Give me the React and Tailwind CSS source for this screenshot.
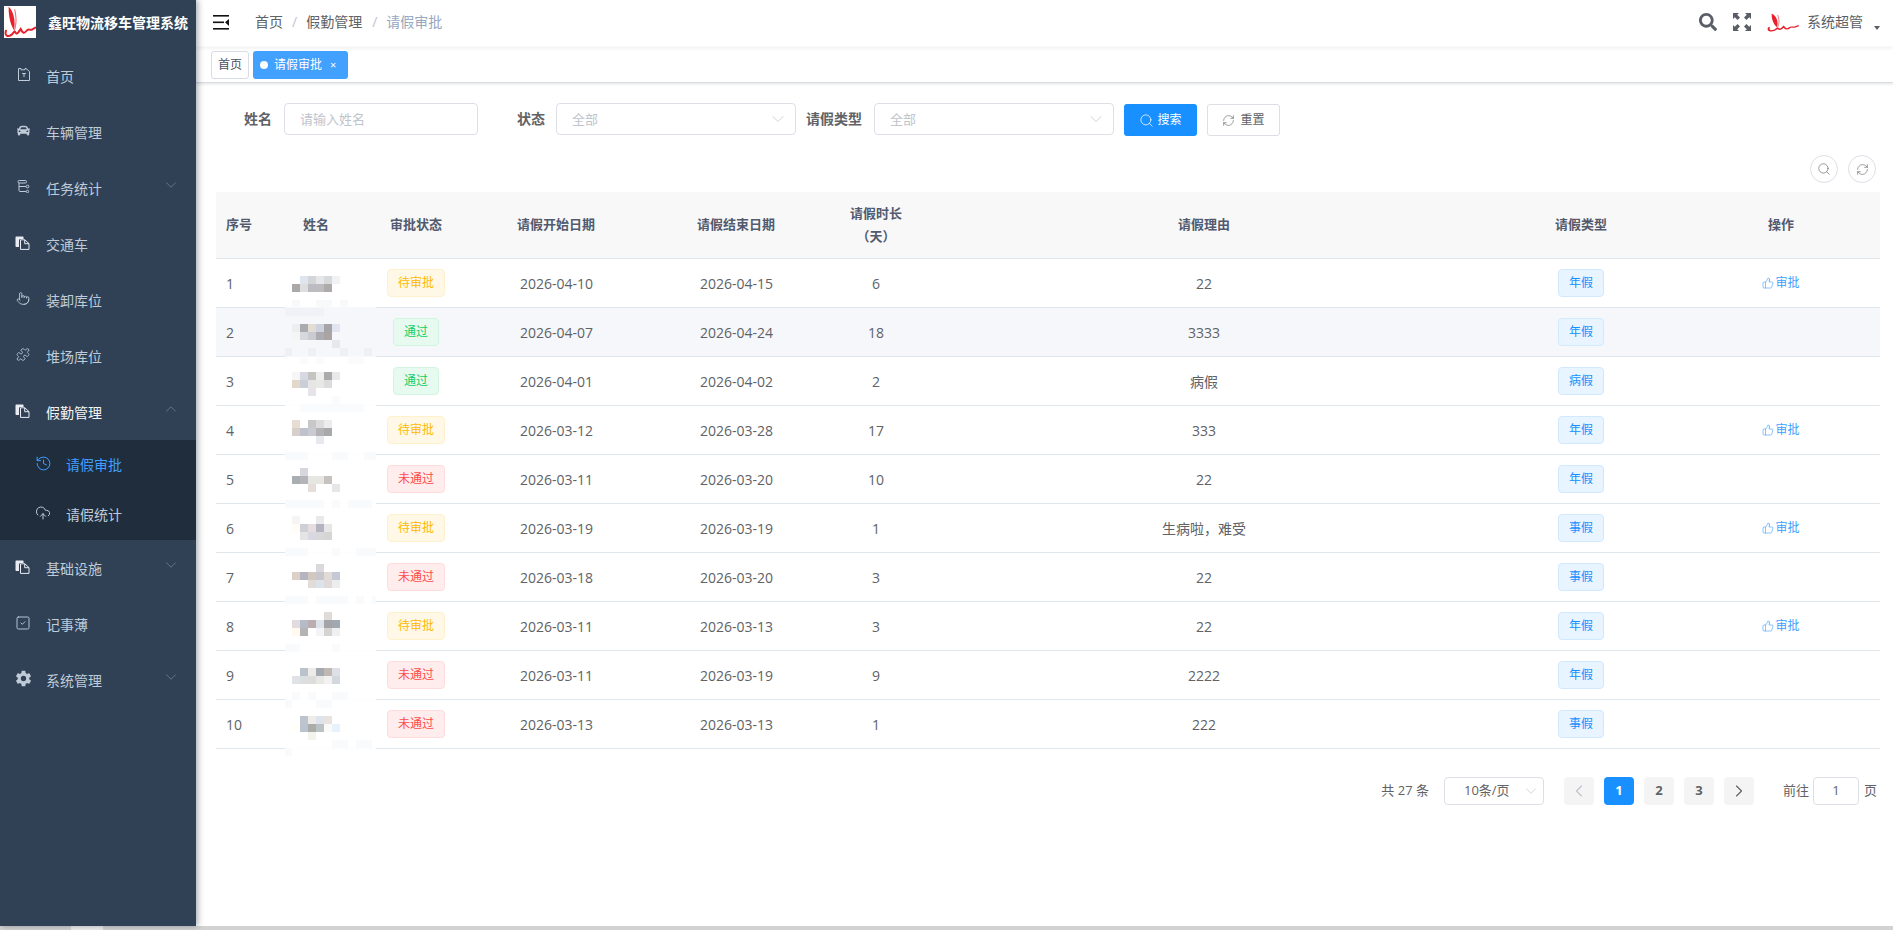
import React from 'react'
import { ChevronDown, ChevronUp, ChevronLeft, ChevronRight, Search, RefreshCw, ThumbsUp, History, CloudUpload, SquareCheck, Puzzle, Pointer } from 'lucide-react'
import { FaCar, FaSearch } from 'react-icons/fa'
import { IoSettingsSharp } from 'react-icons/io5'

const rows = [
  [1, '待审批', '2026-04-10', '2026-04-15', 6, '22', '年假', true],
  [2, '通过', '2026-04-07', '2026-04-24', 18, '3333', '年假', false],
  [3, '通过', '2026-04-01', '2026-04-02', 2, '病假', '病假', false],
  [4, '待审批', '2026-03-12', '2026-03-28', 17, '333', '年假', true],
  [5, '未通过', '2026-03-11', '2026-03-20', 10, '22', '年假', false],
  [6, '待审批', '2026-03-19', '2026-03-19', 1, '生病啦，难受', '事假', true],
  [7, '未通过', '2026-03-18', '2026-03-20', 3, '22', '事假', false],
  [8, '待审批', '2026-03-11', '2026-03-13', 3, '22', '年假', true],
  [9, '未通过', '2026-03-11', '2026-03-19', 9, '2222', '年假', false],
  [10, '未通过', '2026-03-13', '2026-03-13', 1, '222', '事假', false],
]

const tagClass = {
  待审批: 'bg-[#fff8e6] border-[#fff1cc] text-[#ffba00]',
  通过: 'bg-[#e7faf0] border-[#d0f5e0] text-[#13ce66]',
  未通过: 'bg-[#ffeded] border-[#ffdbdb] text-[#ff4949]',
}

// [y, first column, colours...] column 0 sits at x=284, cells are 8px
const mosaic = [
  [276, 2, '#dfe5ec', '#d4d5d8', '#e6e7e9', '#d8d9db', '#f0f2f6'],
  [284, 1, '#aaa8a8', '#dedede', '#bcbcc2', '#bebcc0', '#aeacab'],
  [324, 1, '#eeeef2', '#a9abaf', '#e3dcd3', '#cdd2df', '#a5a5a8', '#e0e5f0'],
  [332, 1, '#f5f5f5', '#d6d8de', '#cbcad0', '#adacb3', '#aaa5a2'],
  [340, 6, '#e8e8ec'],
  [372, 1, '#f6f6f6', '#d6d9e1', '#c4c4c2', '#eeeeec', '#a9abad', '#e8e8ea'],
  [380, 1, '#e3d8cc', '#c9ced8', '#e6e6e4', '#e8e8e6', '#dcdcdc'],
  [388, 3, '#e6e4e8'],
  [420, 1, '#e8ddd3', '#ffffff', '#c9c8c8', '#dcdcde', '#ececec'],
  [428, 1, '#d6cfcc', '#bfc2cb', '#c8ccd2', '#b4b2b4', '#a8a9ab'],
  [436, 4, '#e6eaef'],
  [468, 2, '#d6d8de'],
  [476, 1, '#a9aeb2', '#b3b5b8', '#e6e7e2', '#e6e6e2', '#c6c2c0'],
  [484, 3, '#e6dedb'],
  [484, 6, '#e6e6e8'],
  [516, 1, '#f5f5f5'],
  [516, 4, '#e9eaee'],
  [524, 1, '#fffcf8', '#cfd0d6', '#e6dde0', '#b5b3c0', '#e7e7e7'],
  [532, 2, '#e4e4e4', '#d8d8e0', '#d8d8dc', '#d5d5d5'],
  [564, 4, '#dadade'],
  [572, 1, '#dccfc6', '#b3b6c0', '#d2c8c0', '#c8c8cc', '#e0dbd8', '#c5c9d6'],
  [580, 3, '#e2dcd8', '#dde3ea', '#dedbda', '#ededed'],
  [612, 5, '#dfdbd8'],
  [620, 1, '#e0dce0', '#b5bcc8', '#bbaeb0', '#dde3e8', '#a4a4a8', '#a0a8b0'],
  [628, 1, '#fff9ef', '#b5b3b3', '#ffffff', '#f2f4f7', '#d6d3d3', '#eff0f2'],
  [668, 2, '#bac2cc', '#eeece8', '#a5aab0', '#c0b8b2', '#dde0e6'],
  [676, 1, '#e0e2e6', '#dcdfe0', '#dfdcdc', '#e8e8e4', '#f3f2f0', '#d3d8de'],
  [716, 2, '#bec4ce', '#eeece8', '#dfe3ee', '#e6e3e0'],
  [724, 1, '#fffef8', '#bbc3cf', '#a9aca8', '#bcc1c6', '#fafaf7', '#e8f2fd'],
  [732, 3, '#f3f3ee'],
]

// faint blocks of the mosaic: [x, y, width, height, colour]
const faint = [
  [285, 307, 91, 1, '#f8f9fc'], [285, 356, 91, 1, '#f7f8fb'], [285, 405, 91, 1, '#fdfdfe'],
  [285, 454, 91, 1, '#fdfdfe'], [285, 503, 91, 1, '#fdfdfe'], [285, 552, 91, 1, '#fdfdfe'],
  [285, 601, 91, 1, '#fdfdfe'], [285, 650, 91, 1, '#fdfdfe'], [285, 699, 91, 1, '#fdfdfe'],
  [285, 748, 91, 1, '#fdfdfe'],
  [292, 300, 8, 8, '#f8f9fb'], [316, 300, 16, 8, '#f8f9fb'], [340, 300, 8, 8, '#f8f9fb'],
  [285, 308, 24, 8, '#f1f2f7'], [308, 308, 16, 8, '#f1f2f7'],
  [285, 348, 7, 8, '#eff0f5'], [308, 348, 8, 8, '#eff0f5'], [340, 348, 8, 8, '#eff0f5'], [364, 348, 8, 8, '#eff0f5'],
  [300, 356, 8, 8, '#fbfbfc'], [316, 356, 8, 8, '#fbfbfc'], [348, 356, 16, 8, '#fbfbfc'],
  [300, 404, 64, 8, '#fafbfd'], [332, 396, 8, 8, '#fafbfd'],
  [285, 452, 23, 8, '#f9fafc'], [332, 452, 16, 8, '#f9fafc'], [364, 452, 12, 8, '#f9fafc'],
  [285, 500, 39, 8, '#f9fafc'], [332, 500, 8, 8, '#f9fafc'], [348, 500, 24, 8, '#f9fafc'],
  [285, 548, 23, 8, '#f9fafc'], [332, 548, 8, 8, '#f9fafc'], [356, 548, 20, 8, '#f9fafc'],
  [285, 596, 23, 8, '#f9fafc'], [316, 596, 32, 8, '#f9fafc'], [356, 596, 8, 8, '#f9fafc'], [372, 596, 4, 8, '#f9fafc'],
  [285, 644, 15, 8, '#f9fafc'], [332, 644, 8, 8, '#f9fafc'],
  [292, 692, 8, 8, '#f9fafc'], [308, 692, 8, 8, '#f9fafc'], [332, 692, 16, 8, '#f9fafc'],
  [285, 700, 7, 8, '#f9fafc'], [316, 700, 16, 8, '#f9fafc'],
  [332, 740, 16, 8, '#f9fafc'], [356, 740, 16, 8, '#f9fafc'], [285, 748, 7, 8, '#f9fafc'],
]

function Logo({ className }) {
  return (
    <svg className={className} viewBox="0 0 96 96" fill="none" preserveAspectRatio="none">
      <path d="M14 2C26 12 36 40 30 72C22 60 13 36 14 2Z" fill="#e9202c" />
      <path d="M32 10C37 32 38 52 31 74" stroke="#ef5a62" strokeWidth="3" />
      <path d="M6 74C1 90 12 94 23 86C30 80 31 72 35 80C38 88 44 78 50 69C54 77 59 86 67 75C73 67 77 73 84 71L94 65" stroke="#e9202c" strokeWidth="6" strokeLinecap="round" />
    </svg>
  )
}

function DocIcon() {
  return (
    <svg width="15" height="14" viewBox="0 0 15 14" className="-ml-px">
      <path d="M0.5 1.5C0.5 .9 1 .5 1.5 .5H7.5C8.2.5 8.6 1 8.6 1.6V3H5.5C4.7 3 4 3.7 4 4.5V11H1.5C1 11 .5 10.6 .5 10Z" fill="#e8ecf2" />
      <path d="M5.5 3.8H9.8L14 7.6V13.4H5.5Z" fill="none" stroke="#e8ecf2" strokeWidth="1" />
      <path d="M9.7 3.8V7.7H14" fill="none" stroke="#e8ecf2" strokeWidth="1" />
    </svg>
  )
}

function PageIcon() {
  return (
    <svg width="12" height="13" viewBox="0 0 12 13" fill="none" stroke="#bfcbd9" strokeWidth="1" className="ml-px">
      <path d="M.5.5H3V1.8H7V.5H8L11.5 3.5V12.5H.5Z" />
      <path d="M4 5.5H8M6 5.5V9" />
    </svg>
  )
}

function TreeIcon() {
  return (
    <svg width="13" height="13" viewBox="0 0 13 13" fill="none" stroke="#bfcbd9" strokeWidth="1" className="ml-px">
      <rect x="1" y=".5" width="8.5" height="2.5" rx="1.2" />
      <path d="M2 3V10.5C2 11 2.5 11.5 3 11.5H9M2 6.5H9" />
      <circle cx="10.5" cy="6.5" r="1.4" />
      <circle cx="10.5" cy="11.5" r="1.2" />
    </svg>
  )
}

function MenuItem({ icon, label, open, hasChildren, bright }) {
  return (
    <div className="h-14 flex items-center pl-4 relative">
      <span className="w-[14px] mr-4 -mt-[3px] flex items-center justify-center shrink-0 text-[#bfcbd9]">{icon}</span>
      <span className={`text-sm mt-[2px] ${bright ? 'text-[#f4f4f5]' : 'text-[#bfcbd9]'}`}>{label}</span>
      {hasChildren && (
        <span className="absolute right-4 top-4 text-[#7e8b9c]">
          {open ? <ChevronUp size={18} strokeWidth={0.9} /> : <ChevronDown size={18} strokeWidth={0.9} />}
        </span>
      )}
    </div>
  )
}

function Sidebar() {
  return (
    <aside className="w-[196px] shrink-0 bg-[#304156] shadow-[2px_0_6px_rgba(0,21,41,0.35)] relative z-10">
      <div className="h-12 flex items-center pl-1">
        <div className="w-8 h-8 bg-white shrink-0 mb-[4px]"><Logo className="w-8 h-8" /></div>
        <span className="ml-3 text-sm font-bold text-white whitespace-nowrap mb-[3px]">鑫旺物流移车管理系统</span>
      </div>
      <MenuItem icon={<PageIcon />} label="首页" />
      <MenuItem icon={<FaCar size={13} />} label="车辆管理" />
      <MenuItem icon={<TreeIcon />} label="任务统计" hasChildren />
      <MenuItem icon={<DocIcon />} label="交通车" />
      <MenuItem icon={<Pointer size={15} strokeWidth={1.5} />} label="装卸库位" />
      <MenuItem icon={<Puzzle size={15} strokeWidth={1.4} />} label="堆场库位" />
      <MenuItem icon={<DocIcon />} label="假勤管理" hasChildren open bright />
      <div className="bg-[#1f2d3d]">
        <div className="h-[50px] flex items-center pl-[35px]">
          <History size={17} strokeWidth={1.4} className="text-[#409eff] -mt-1" />
          <span className="ml-[14px] text-sm text-[#409eff]">请假审批</span>
        </div>
        <div className="h-[50px] flex items-center pl-[35px]">
          <CloudUpload size={16} strokeWidth={1.5} className="text-[#bfcbd9] -mt-1" />
          <span className="ml-[15px] text-sm text-[#bfcbd9]">请假统计</span>
        </div>
      </div>
      <MenuItem icon={<DocIcon />} label="基础设施" hasChildren />
      <MenuItem icon={<SquareCheck size={16} strokeWidth={1.4} className="shrink-0" />} label="记事薄" />
      <MenuItem icon={<IoSettingsSharp size={17} className="shrink-0" />} label="系统管理" hasChildren />
    </aside>
  )
}

function Navbar() {
  return (
    <header className="h-[47px] pb-[3px] flex items-center shadow-[0_1px_4px_rgba(0,21,41,0.08)] relative shrink-0">
      <svg width="16" height="15" viewBox="0 0 16 15" className="ml-[17px]" fill="#111">
        <rect x="0" y="0" width="16" height="1.6" />
        <rect x="0" y="6.5" width="11" height="1.6" />
        <rect x="0" y="13" width="16" height="1.6" />
        <path d="M16 4V11L12 7.3Z" />
      </svg>
      <nav className="ml-[26px] flex items-center text-sm text-[#606266]">
        <span>首页</span>
        <span className="mx-[9px] text-[#c0c4cc]">/</span>
        <span>假勤管理</span>
        <span className="ml-[10px] mr-[9px] text-[#c0c4cc]">/</span>
        <span className="text-[#97a8be]">请假审批</span>
      </nav>
      <div className="ml-auto flex items-center pr-[13px]">
        <FaSearch size={18} className="text-[#5a5e66]" />
        <svg width="18" height="18" viewBox="0 0 18 18" className="ml-4" fill="#5a5e66">
          <path d="M0 0H6L4.2 1.8L7 4.6L4.6 7L1.8 4.2L0 6Z" />
          <path d="M18 0V6L16.2 4.2L13.4 7L11 4.6L13.8 1.8L12 0Z" />
          <path d="M0 18V12L1.8 13.8L4.6 11L7 13.4L4.2 16.2L6 18Z" />
          <path d="M18 18H12L13.8 16.2L11 13.4L13.4 11L16.2 13.8L18 12Z" />
        </svg>
        <Logo className="w-8 h-[19px] ml-4" />
        <span className="ml-2 text-sm text-[#5a5e66]">系统超管</span>
        <span className="ml-[11px] mt-3 w-0 h-0 border-x-[3.5px] border-x-transparent border-t-[4px] border-t-[#5a5e66]" />
      </div>
    </header>
  )
}

function Tags() {
  return (
    <div className="h-[36px] shrink-0 flex items-center pl-[15px] gap-1 border-b border-[#d8dce5] shadow-[0_1px_3px_rgba(0,0,0,0.12)] relative">
      <span className="h-7 w-[38px] flex items-center justify-center border border-[#d8dce5] rounded-[3px] text-xs text-[#495060]">首页</span>
      <span className="h-7 w-[95px] flex items-center pl-[7px] rounded-[3px] bg-[#42a0ff] text-xs text-white">
        <span className="w-2 h-2 rounded-full bg-white mr-[6px]" />
        请假审批
        <span className="ml-2 text-[11px] leading-none">×</span>
      </span>
    </div>
  )
}

function Field({ placeholder, width, select }) {
  return (
    <div className={`${width} h-8 border border-[#dcdfe6] rounded flex items-center justify-between ${select ? 'pl-[15px] pr-[7px]' : 'pl-[15px]'}`}>
      <span className="text-[13px] text-[#c0c4cc]">{placeholder}</span>
      {select && <ChevronDown size={20} strokeWidth={0.9} className="text-[#c0c4cc]" />}
    </div>
  )
}

function Filters() {
  return (
    <div className="flex items-start mt-5 pl-12 text-sm font-bold text-[#606266]">
      <label className="leading-8 mr-3">姓名</label>
      <Field placeholder="请输入姓名" width="w-[194px] font-normal" />
      <label className="leading-8 ml-[39px] mr-[11px]">状态</label>
      <Field placeholder="全部" width="w-[240px] font-normal" select />
      <label className="leading-8 ml-[10px] mr-3">请假类型</label>
      <Field placeholder="全部" width="w-[240px] font-normal" select />
      <button className="ml-[10px] mt-px w-[73px] h-8 rounded-[3px] bg-[#1890ff] text-white text-xs font-normal flex items-center justify-center gap-[3px]">
        <Search size={15} strokeWidth={1.2} />搜索
      </button>
      <button className="ml-[10px] mt-px w-[73px] h-8 rounded-[3px] border border-[#dcdfe6] text-[#606266] text-xs font-normal flex items-center justify-center gap-[5px]">
        <RefreshCw size={13} strokeWidth={1.1} />重置
      </button>
    </div>
  )
}

function DataTable() {
  return (
    <div className="relative ml-5 w-[1664px]">
      <table className="w-full table-fixed text-sm text-[#606266]">
        <colgroup>
          <col className="w-[50px]" />
          <col className="w-[100px]" />
          <col className="w-[100px]" />
          <col className="w-[180px]" />
          <col className="w-[180px]" />
          <col className="w-[100px]" />
          <col className="w-[556px]" />
          <col className="w-[198px]" />
          <col className="w-[200px]" />
        </colgroup>
        <thead>
          <tr className="h-[66px] bg-[#f8f8f9] text-[13px] font-bold text-[#515a6e] border-b border-[#dfe6ec]">
            <th className="text-left pl-[10px] font-bold">序号</th>
            <th className="font-bold">姓名</th>
            <th className="font-bold">审批状态</th>
            <th className="font-bold">请假开始日期</th>
            <th className="font-bold">请假结束日期</th>
            <th className="font-bold leading-[23px]">请假时长<br />（天）</th>
            <th className="font-bold">请假理由</th>
            <th className="font-bold">请假类型</th>
            <th className="font-bold pl-[2px]">操作</th>
          </tr>
        </thead>
        <tbody>
          {rows.map(([no, status, start, end, days, reason, type, pending]) => (
            <tr key={no} className={`h-[49px] border-b border-[#dfe6ec] ${no === 2 ? 'bg-[#f5f7fa]' : ''}`}>
              <td className="pl-[10px] pt-[2px]">{no}</td>
              <td />
              <td className="text-center">
                <span className={`inline-flex items-center h-7 px-[10px] border rounded text-xs ${tagClass[status]}`}>{status}</span>
              </td>
              <td className="text-center pt-[2px] pl-px">{start}</td>
              <td className="text-center pt-[2px] pl-px">{end}</td>
              <td className="text-center pt-[2px]">{days}</td>
              <td className="text-center pt-[2px]">{reason}</td>
              <td className="text-center">
                <span className="inline-flex items-center h-7 px-[10px] border rounded text-xs bg-[#e8f4ff] border-[#d1e9ff] text-[#1890ff]">{type}</span>
              </td>
              <td className="text-center pt-[2px] pl-[2px]">
                {pending && (
                  <span className="inline-flex items-center gap-px text-xs text-[#409eff]">
                    <ThumbsUp size={12} strokeWidth={1.2} />审批
                  </span>
                )}
              </td>
            </tr>
          ))}
        </tbody>
      </table>
      <svg className="absolute left-[68px] top-[66px] pointer-events-none" width="92" height="500" viewBox="284 258 92 500">
        {faint.map(([x, y, w, h, fill], i) => <rect key={i} x={x} y={y} width={w} height={h} fill={fill} />)}
        {mosaic.map(([y, col, ...colors], i) => colors.map((fill, j) => (
          <rect key={`${i}-${j}`} x={284 + (col + j) * 8} y={y} width="8" height="8" fill={fill} />
        )))}
      </svg>
    </div>
  )
}

function Pagination() {
  const btn = 'w-[30px] h-7 rounded-sm bg-[#f4f4f5] flex items-center justify-center text-[13px] font-bold'
  return (
    <div className="flex items-center justify-end pr-4 mt-7 text-[13px] text-[#606266]">
      <span className="mr-[15px]">共 27 条</span>
      <div className="w-[100px] h-7 border border-[#dcdfe6] rounded flex items-center justify-between pl-[19px] pr-[3px]">
        <span>10条/页</span>
        <ChevronDown size={18} strokeWidth={0.9} className="text-[#c0c4cc]" />
      </div>
      <div className="flex gap-[10px] ml-5 mr-[29px] text-[#606266]">
        <span className={`${btn} text-[#c0c4cc]`}><ChevronLeft size={20} strokeWidth={1.4} /></span>
        <span className={`${btn} !bg-[#1890ff] text-white`}>1</span>
        <span className={btn}>2</span>
        <span className={btn}>3</span>
        <span className={btn}><ChevronRight size={20} strokeWidth={1.4} /></span>
      </div>
      <span>前往</span>
      <div className="ml-1 w-[46px] h-7 border border-[#dcdfe6] rounded flex items-center justify-center">1</div>
      <span className="ml-[5px]">页</span>
    </div>
  )
}

export default function App() {
  return (
    <div className="h-[930px] w-[1893px] overflow-hidden flex flex-col bg-white font-['Open_Sans','Noto_Sans_CJK_SC',sans-serif]">
      <div className="flex flex-1 min-h-0">
        <Sidebar />
        <main className="flex-1 min-w-0 flex flex-col">
          <Navbar />
          <Tags />
          <Filters />
          <div className="flex justify-end gap-[10px] pr-[17px] mt-[19px] mb-[9px]">
            <span className="w-7 h-7 rounded-full border border-[#dcdfe6] flex items-center justify-center text-[#606266]"><Search size={14} strokeWidth={1.1} /></span>
            <span className="w-7 h-7 rounded-full border border-[#dcdfe6] flex items-center justify-center text-[#606266]"><RefreshCw size={13} strokeWidth={1.1} /></span>
          </div>
          <DataTable />
          <Pagination />
        </main>
      </div>
      <div className="h-1 shrink-0 bg-[#d2d2d2]">
        <div className="ml-[71px] w-8 h-1 bg-[#efefef]" />
      </div>
    </div>
  )
}
